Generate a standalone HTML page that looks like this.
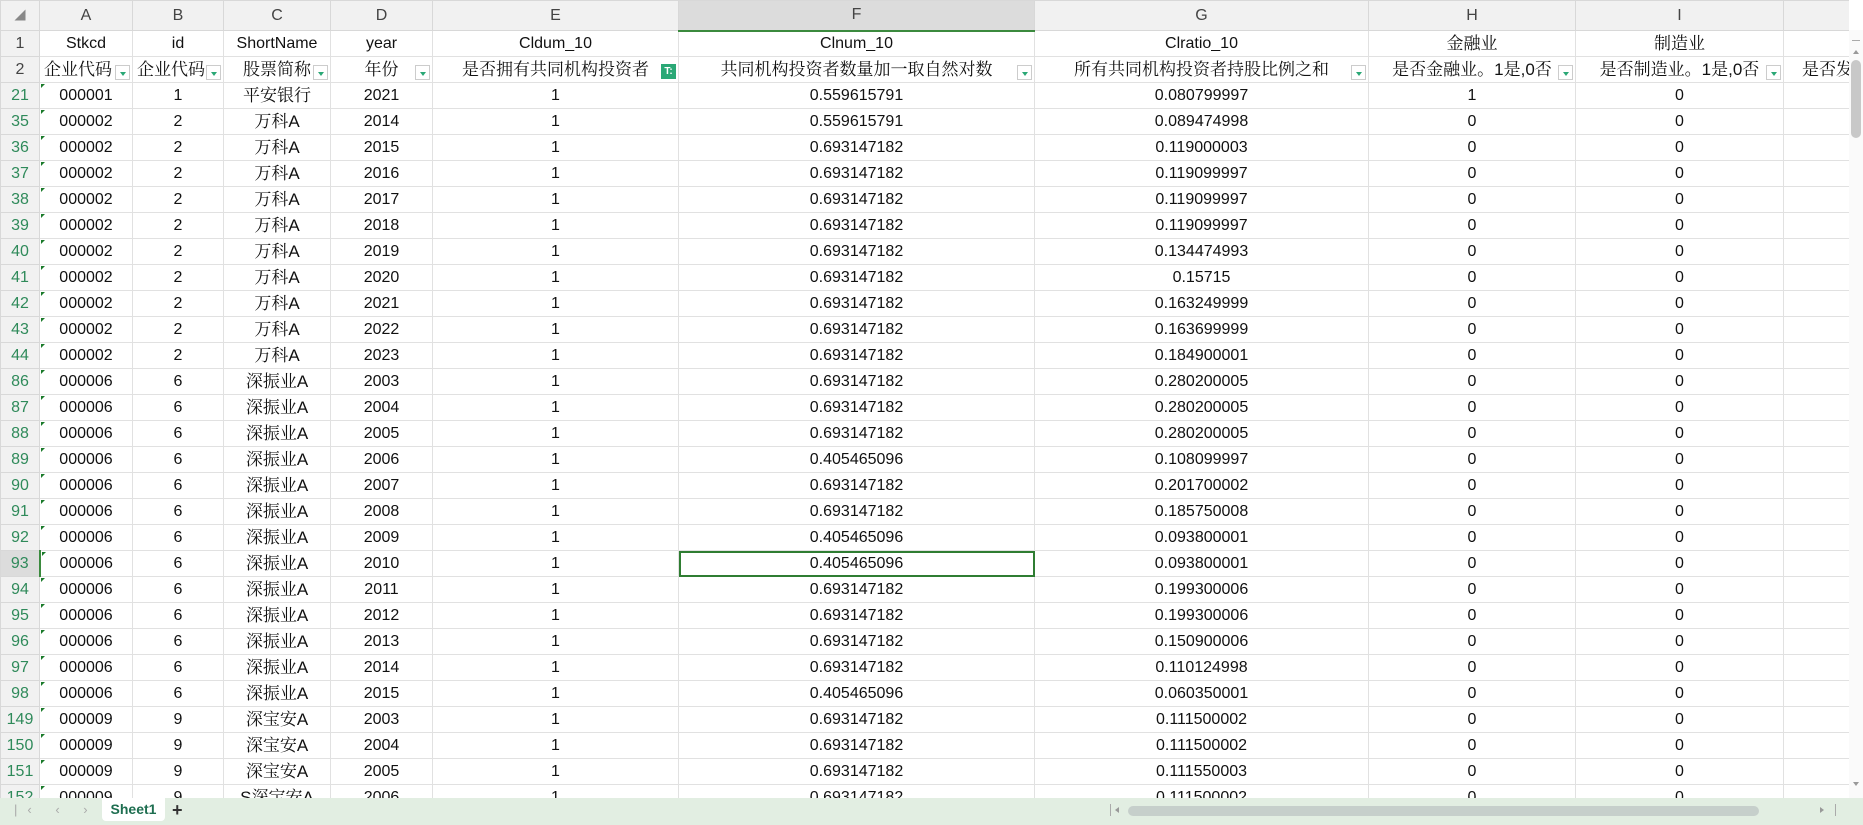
<!DOCTYPE html>
<html><head><meta charset="utf-8"><style>
*{margin:0;padding:0;box-sizing:border-box}
body{width:1863px;height:825px;overflow:hidden;background:#fff;font-family:"Liberation Sans","Noto Sans CJK SC",sans-serif;font-size:16px;color:#111;position:relative}
#grid{position:absolute;left:0;top:0;width:1849px;height:798px;overflow:hidden}
table{border-collapse:collapse;table-layout:fixed;width:1863px}
td{border:1px solid #e1e1e1;height:26px;text-align:center;white-space:nowrap;overflow:hidden;padding:0;line-height:24px;position:relative}
tr.ch td{height:30px;background:#f1f1f1;color:#444;border-color:#d8d8d8;font-size:16px}
tr.ch td.sel{background:#dcdcdc;border-bottom:2px solid #3b8a3e}
td.rh{background:#f1f1f1;color:#2f8a5a;border-color:#d8d8d8;font-size:16px}
td.rh.k{color:#444}
td.rh.sel{background:#dcdcdc;border-right:2px solid #3b8a3e}
.cn{font-family:"Liberation Sans","Noto Serif CJK SC",serif;font-size:17px}
.tri:before{content:"";position:absolute;left:1px;top:1px;border-left:4px solid #1a7a2a;border-bottom:4px solid transparent}
.f{position:absolute;right:2px;bottom:2px;width:15px;height:15px;border:1px solid #ccc;background:#fff}
.f:after{content:"";position:absolute;left:4px;top:6px;border-left:3px solid transparent;border-right:3px solid transparent;border-top:4px solid #2aa876}
.fg{position:absolute;right:2px;bottom:3px;width:15px;height:15px;background:#2aa876;color:#fff;font-size:10px;line-height:15px;font-weight:bold;font-family:"Liberation Sans",sans-serif}
td.cur{outline:2px solid #2f7d32;outline-offset:-2px}
#vs{position:absolute;left:1849px;top:30px;width:14px;height:768px;background:#fafafa}
#bar{position:absolute;left:0;top:798px;width:1863px;height:27px;background:#e2eee2}
</style></head><body>
<div id="grid"><table>
<colgroup><col style="width:39px"><col style="width:93px"><col style="width:91px"><col style="width:107px"><col style="width:102px"><col style="width:246px"><col style="width:356px"><col style="width:334px"><col style="width:207px"><col style="width:208px"><col style="width:80px"></colgroup>
<tr class="ch"><td style="font-size:11px;color:#888">◢</td><td>A</td><td>B</td><td>C</td><td>D</td><td>E</td><td class="sel">F</td><td>G</td><td>H</td><td>I</td><td></td></tr>
<tr><td class="rh k">1</td><td>Stkcd</td><td>id</td><td>ShortName</td><td>year</td><td>Cldum_10</td><td>Clnum_10</td><td>Clratio_10</td><td class="cn">金融业</td><td class="cn">制造业</td><td></td></tr>
<tr class="cn"><td class="rh k" style="font-family:'Liberation Sans';font-size:16px">2</td><td style="text-align:left;padding-left:4px">企业代码<span class="f"></span></td><td style="text-align:left;padding-left:4px">企业代码<span class="f"></span></td><td>股票简称<span class="f"></span></td><td>年份<span class="f"></span></td><td>是否拥有共同机构投资者<span class="fg">T:</span></td><td>共同机构投资者数量加一取自然对数<span class="f"></span></td><td>所有共同机构投资者持股比例之和<span class="f"></span></td><td>是否金融业。1是,0否<span class="f"></span></td><td>是否制造业。1是,0否<span class="f"></span></td><td style="text-align:left;padding-left:18px">是否发</td></tr>
<tr><td class="rh">21</td><td class="tri">000001</td><td>1</td><td class="cn">平安银行</td><td>2021</td><td>1</td><td>0.559615791</td><td>0.080799997</td><td>1</td><td>0</td><td></td></tr>
<tr><td class="rh">35</td><td class="tri">000002</td><td>2</td><td class="cn">万科A</td><td>2014</td><td>1</td><td>0.559615791</td><td>0.089474998</td><td>0</td><td>0</td><td></td></tr>
<tr><td class="rh">36</td><td class="tri">000002</td><td>2</td><td class="cn">万科A</td><td>2015</td><td>1</td><td>0.693147182</td><td>0.119000003</td><td>0</td><td>0</td><td></td></tr>
<tr><td class="rh">37</td><td class="tri">000002</td><td>2</td><td class="cn">万科A</td><td>2016</td><td>1</td><td>0.693147182</td><td>0.119099997</td><td>0</td><td>0</td><td></td></tr>
<tr><td class="rh">38</td><td class="tri">000002</td><td>2</td><td class="cn">万科A</td><td>2017</td><td>1</td><td>0.693147182</td><td>0.119099997</td><td>0</td><td>0</td><td></td></tr>
<tr><td class="rh">39</td><td class="tri">000002</td><td>2</td><td class="cn">万科A</td><td>2018</td><td>1</td><td>0.693147182</td><td>0.119099997</td><td>0</td><td>0</td><td></td></tr>
<tr><td class="rh">40</td><td class="tri">000002</td><td>2</td><td class="cn">万科A</td><td>2019</td><td>1</td><td>0.693147182</td><td>0.134474993</td><td>0</td><td>0</td><td></td></tr>
<tr><td class="rh">41</td><td class="tri">000002</td><td>2</td><td class="cn">万科A</td><td>2020</td><td>1</td><td>0.693147182</td><td>0.15715</td><td>0</td><td>0</td><td></td></tr>
<tr><td class="rh">42</td><td class="tri">000002</td><td>2</td><td class="cn">万科A</td><td>2021</td><td>1</td><td>0.693147182</td><td>0.163249999</td><td>0</td><td>0</td><td></td></tr>
<tr><td class="rh">43</td><td class="tri">000002</td><td>2</td><td class="cn">万科A</td><td>2022</td><td>1</td><td>0.693147182</td><td>0.163699999</td><td>0</td><td>0</td><td></td></tr>
<tr><td class="rh">44</td><td class="tri">000002</td><td>2</td><td class="cn">万科A</td><td>2023</td><td>1</td><td>0.693147182</td><td>0.184900001</td><td>0</td><td>0</td><td></td></tr>
<tr><td class="rh">86</td><td class="tri">000006</td><td>6</td><td class="cn">深振业A</td><td>2003</td><td>1</td><td>0.693147182</td><td>0.280200005</td><td>0</td><td>0</td><td></td></tr>
<tr><td class="rh">87</td><td class="tri">000006</td><td>6</td><td class="cn">深振业A</td><td>2004</td><td>1</td><td>0.693147182</td><td>0.280200005</td><td>0</td><td>0</td><td></td></tr>
<tr><td class="rh">88</td><td class="tri">000006</td><td>6</td><td class="cn">深振业A</td><td>2005</td><td>1</td><td>0.693147182</td><td>0.280200005</td><td>0</td><td>0</td><td></td></tr>
<tr><td class="rh">89</td><td class="tri">000006</td><td>6</td><td class="cn">深振业A</td><td>2006</td><td>1</td><td>0.405465096</td><td>0.108099997</td><td>0</td><td>0</td><td></td></tr>
<tr><td class="rh">90</td><td class="tri">000006</td><td>6</td><td class="cn">深振业A</td><td>2007</td><td>1</td><td>0.693147182</td><td>0.201700002</td><td>0</td><td>0</td><td></td></tr>
<tr><td class="rh">91</td><td class="tri">000006</td><td>6</td><td class="cn">深振业A</td><td>2008</td><td>1</td><td>0.693147182</td><td>0.185750008</td><td>0</td><td>0</td><td></td></tr>
<tr><td class="rh">92</td><td class="tri">000006</td><td>6</td><td class="cn">深振业A</td><td>2009</td><td>1</td><td>0.405465096</td><td>0.093800001</td><td>0</td><td>0</td><td></td></tr>
<tr><td class="rh sel">93</td><td class="tri">000006</td><td>6</td><td class="cn">深振业A</td><td>2010</td><td>1</td><td class="cur">0.405465096</td><td>0.093800001</td><td>0</td><td>0</td><td></td></tr>
<tr><td class="rh">94</td><td class="tri">000006</td><td>6</td><td class="cn">深振业A</td><td>2011</td><td>1</td><td>0.693147182</td><td>0.199300006</td><td>0</td><td>0</td><td></td></tr>
<tr><td class="rh">95</td><td class="tri">000006</td><td>6</td><td class="cn">深振业A</td><td>2012</td><td>1</td><td>0.693147182</td><td>0.199300006</td><td>0</td><td>0</td><td></td></tr>
<tr><td class="rh">96</td><td class="tri">000006</td><td>6</td><td class="cn">深振业A</td><td>2013</td><td>1</td><td>0.693147182</td><td>0.150900006</td><td>0</td><td>0</td><td></td></tr>
<tr><td class="rh">97</td><td class="tri">000006</td><td>6</td><td class="cn">深振业A</td><td>2014</td><td>1</td><td>0.693147182</td><td>0.110124998</td><td>0</td><td>0</td><td></td></tr>
<tr><td class="rh">98</td><td class="tri">000006</td><td>6</td><td class="cn">深振业A</td><td>2015</td><td>1</td><td>0.405465096</td><td>0.060350001</td><td>0</td><td>0</td><td></td></tr>
<tr><td class="rh">149</td><td class="tri">000009</td><td>9</td><td class="cn">深宝安A</td><td>2003</td><td>1</td><td>0.693147182</td><td>0.111500002</td><td>0</td><td>0</td><td></td></tr>
<tr><td class="rh">150</td><td class="tri">000009</td><td>9</td><td class="cn">深宝安A</td><td>2004</td><td>1</td><td>0.693147182</td><td>0.111500002</td><td>0</td><td>0</td><td></td></tr>
<tr><td class="rh">151</td><td class="tri">000009</td><td>9</td><td class="cn">深宝安A</td><td>2005</td><td>1</td><td>0.693147182</td><td>0.111550003</td><td>0</td><td>0</td><td></td></tr>
<tr><td class="rh">152</td><td class="tri">000009</td><td>9</td><td class="cn">S深宝安A</td><td>2006</td><td>1</td><td>0.693147182</td><td>0.111500002</td><td>0</td><td>0</td><td></td></tr>
</table></div>
<div id="vs">
<div style="position:absolute;left:3px;top:10px;width:8px;height:1px;background:#aaa"></div>
<div style="position:absolute;left:4px;top:20px;border-left:3px solid transparent;border-right:3px solid transparent;border-bottom:4px solid #999"></div>
<div style="position:absolute;left:2px;top:30px;width:10px;height:78px;background:#c8c8c8;border-radius:5px"></div>
<div style="position:absolute;left:4px;top:752px;border-left:3px solid transparent;border-right:3px solid transparent;border-top:4px solid #999"></div>
</div>
<div id="bar">
<div style="position:absolute;left:14px;top:4px;color:#aaa;font-size:13px;letter-spacing:10px">|‹ ‹ › ›|</div>
<div style="position:absolute;left:102px;top:0;width:63px;height:23px;background:#fff;border-radius:0 0 4px 4px;color:#1e6e50;font-weight:bold;font-size:14px;text-align:center;line-height:22px">Sheet1</div>
<div style="position:absolute;left:172px;top:2px;font-size:18px;color:#333;font-weight:bold">+</div>
<div style="position:absolute;left:1110px;top:6px;width:1px;height:12px;background:#aaa"></div>
<div style="position:absolute;left:1115px;top:9px;border-top:3px solid transparent;border-bottom:3px solid transparent;border-right:4px solid #999"></div>
<div style="position:absolute;left:1128px;top:8px;width:631px;height:10px;background:#c6cfcb;border-radius:5px"></div>
<div style="position:absolute;left:1820px;top:9px;border-top:3px solid transparent;border-bottom:3px solid transparent;border-left:4px solid #999"></div>
<div style="position:absolute;left:1835px;top:6px;width:1px;height:12px;background:#aaa"></div>
</div>
</body></html>
